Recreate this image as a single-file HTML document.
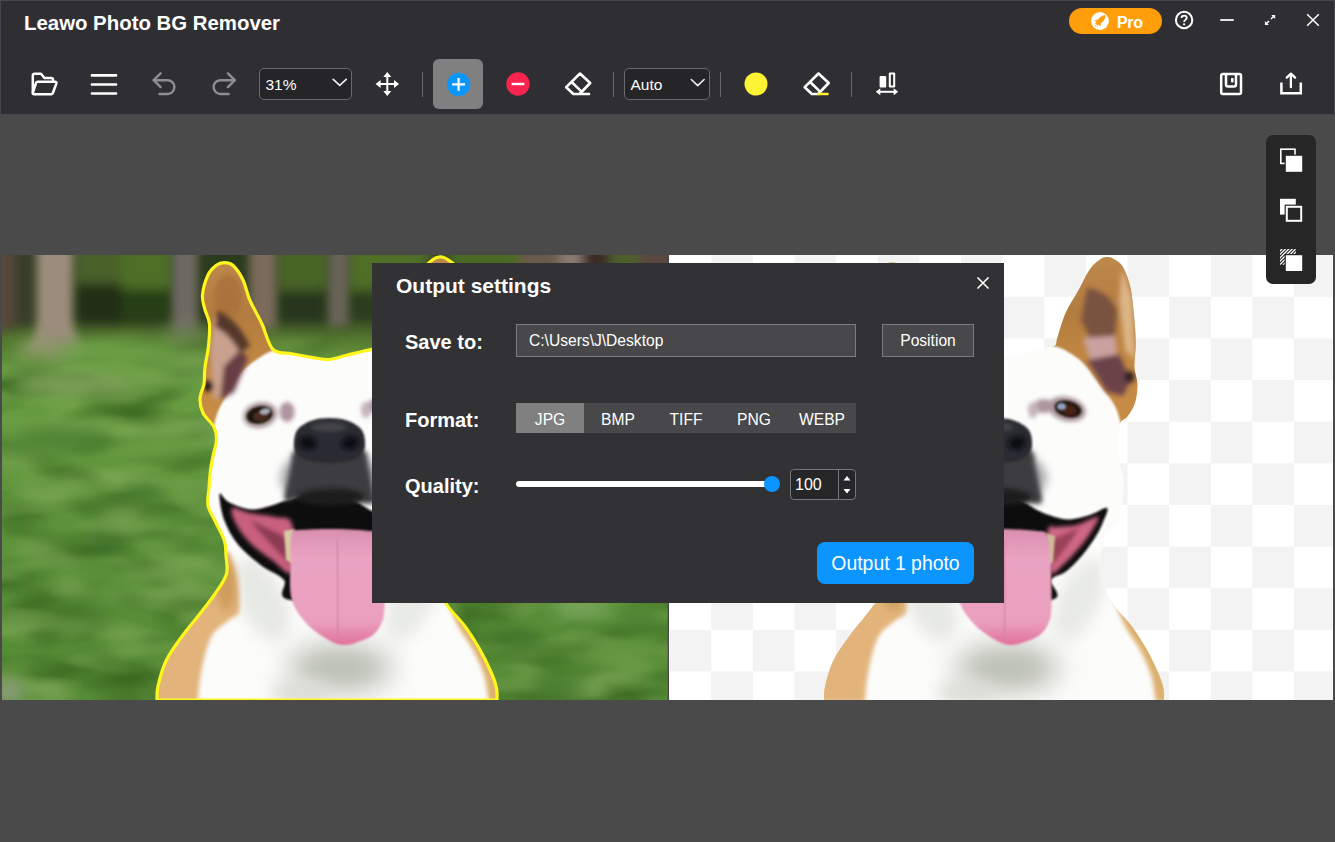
<!DOCTYPE html>
<html><head><meta charset="utf-8">
<style>
*{box-sizing:border-box;margin:0;padding:0}
html,body{width:1335px;height:842px;overflow:hidden;background:#4a4a4a;font-family:"Liberation Sans",sans-serif;}
#app{position:relative;width:1335px;height:842px;background:#4a4a4a;overflow:hidden}
#top{position:absolute;left:0;top:0;width:1335px;height:115px;background:#2f2f33;box-shadow:inset 1px 1px 0 #47474b, inset -1px 0 0 #47474b, inset 0 -1px 0 #47474b}
#title{position:absolute;left:24px;top:12px;font-weight:bold;font-size:20.4px;color:#fff;white-space:nowrap;letter-spacing:0px}
.abs{position:absolute}
.sep{position:absolute;top:72px;width:1px;height:25px;background:#6a6a6e}
.sel{position:absolute;top:68px;height:32px;border:1px solid #6b6b6f;border-radius:5px;background:#252527;color:#fff;font-size:15.5px;line-height:32px;padding-left:5.5px}
#dlg{position:absolute;left:372px;top:263px;width:632px;height:340px;background:#323234;color:#fff}
.lbl{position:absolute;left:33px;font-weight:bold;font-size:20px;white-space:nowrap}
.box{position:absolute;background:#48484a;border:1px solid #7c7c7e;font-size:15.6px;color:#fff;height:33px;line-height:31px;white-space:nowrap}
.tab{position:absolute;top:140px;width:68px;height:30px;background:#48484a;color:#fff;font-size:15.6px;line-height:33px;text-align:center}
</style></head><body>
<div id="app">
<!--PHOTOS-->
<svg class="abs" style="left:0;top:255px" width="1335" height="445" viewBox="0 255 1335 445">
<defs>
<filter id="b1" x="-20%" y="-20%" width="140%" height="140%"><feGaussianBlur stdDeviation="1"/></filter>
<filter id="b2" x="-30%" y="-30%" width="160%" height="160%"><feGaussianBlur stdDeviation="2.2"/></filter>
<filter id="b3" x="-30%" y="-30%" width="160%" height="160%"><feGaussianBlur stdDeviation="2.8"/></filter>
<filter id="b4" x="-30%" y="-30%" width="160%" height="160%"><feGaussianBlur stdDeviation="4"/></filter>
<filter id="b6" x="-30%" y="-30%" width="160%" height="160%"><feGaussianBlur stdDeviation="5.5"/></filter>
<filter id="b8" x="-40%" y="-40%" width="180%" height="180%"><feGaussianBlur stdDeviation="8"/></filter>
<filter id="b14" x="-50%" y="-50%" width="200%" height="200%"><feGaussianBlur stdDeviation="14"/></filter>
<filter id="mottd" x="0" y="0" width="100%" height="100%" color-interpolation-filters="sRGB"><feTurbulence type="fractalNoise" baseFrequency="0.012 0.032" numOctaves="2" seed="7"/><feColorMatrix type="matrix" values="0 0 0 0 0.22  0 0 0 0 0.40  0 0 0 0 0.12  2.0 0 0 0 -0.78"/></filter>
<filter id="mottl" x="0" y="0" width="100%" height="100%" color-interpolation-filters="sRGB"><feTurbulence type="fractalNoise" baseFrequency="0.013 0.036" numOctaves="2" seed="23"/><feColorMatrix type="matrix" values="0 0 0 0 0.52  0 0 0 0 0.68  0 0 0 0 0.36  0 1.7 0 0 -0.72"/></filter><linearGradient id="mfade" x1="0" y1="0" x2="0" y2="1"><stop offset="0" stop-color="#000"/><stop offset="0.1" stop-color="#fff"/></linearGradient><mask id="mm"><rect x="2" y="325" width="666" height="375" fill="url(#mfade)"/></mask>
<linearGradient id="grass" x1="0" y1="0" x2="0" y2="1">
<stop offset="0" stop-color="#3c4a28"/><stop offset="0.14" stop-color="#3a4c26"/><stop offset="0.19" stop-color="#55782f"/><stop offset="0.25" stop-color="#6b9f44"/><stop offset="0.45" stop-color="#62973d"/><stop offset="0.7" stop-color="#598f38"/><stop offset="1" stop-color="#568c36"/>
</linearGradient>
<pattern id="chk" x="669.6" y="255.2" width="83.25" height="83.25" patternUnits="userSpaceOnUse"><rect width="83.25" height="83.25" fill="#fff"/><rect x="41.625" width="41.625" height="41.625" fill="#f3f3f3"/><rect y="41.625" width="41.625" height="41.625" fill="#f3f3f3"/></pattern>
<clipPath id="cl"><rect x="2" y="255" width="665.5" height="445"/></clipPath>
<clipPath id="cr"><rect x="669" y="255" width="664" height="445"/></clipPath>
<clipPath id="dc"><path d="M157.0 700.0 C157.2 697.7 156.5 692.5 158.0 686.0 C159.5 679.5 162.1 669.2 166.0 661.0 C169.9 652.8 176.0 644.7 181.5 637.0 C187.0 629.3 193.3 622.3 199.0 615.0 C204.7 607.7 211.0 599.8 215.6 593.0 C220.2 586.2 224.8 580.2 226.5 574.0 C228.2 567.8 226.3 561.5 226.0 556.0 C225.7 550.5 226.2 546.7 224.5 541.0 C222.8 535.3 218.3 527.9 215.6 522.0 C212.8 516.1 209.1 511.2 208.0 505.5 C206.9 499.8 208.6 493.9 209.0 488.0 C209.4 482.1 209.8 475.3 210.5 470.0 C211.2 464.7 212.0 461.0 213.0 456.0 C214.0 451.0 216.3 444.8 216.5 440.0 C216.7 435.2 216.2 431.5 214.0 427.0 C211.8 422.5 205.3 417.8 203.0 413.0 C200.7 408.2 199.8 402.8 200.0 398.0 C200.2 393.2 203.2 389.2 204.0 384.0 C204.8 378.8 204.2 373.3 205.0 367.0 C205.8 360.7 207.8 353.2 208.5 346.0 C209.2 338.8 210.1 330.2 209.5 324.0 C208.9 317.8 206.0 313.8 204.8 309.0 C203.6 304.2 202.0 300.7 202.5 295.0 C203.0 289.3 205.8 279.9 208.0 275.0 C210.2 270.1 213.3 267.6 216.0 265.5 C218.7 263.4 221.2 262.6 224.0 262.6 C226.8 262.6 229.8 262.6 233.0 265.5 C236.2 268.4 240.2 274.2 243.0 280.0 C245.8 285.8 246.8 293.2 250.0 300.5 C253.2 307.8 258.2 315.8 262.0 324.0 C265.8 332.2 268.0 344.5 273.0 349.5 C278.0 354.5 285.2 352.4 292.0 353.8 C298.8 355.2 307.8 356.9 314.0 357.8 C320.2 358.8 323.7 359.9 329.0 359.5 C334.3 359.1 340.5 356.8 346.0 355.5 C351.5 354.2 356.7 352.8 362.0 351.5 C367.3 350.2 373.7 349.0 378.0 348.0 C382.3 347.0 385.9 347.3 388.0 345.5 C390.1 343.7 388.7 342.4 390.5 337.0 C392.3 331.6 395.2 320.7 398.6 313.0 C402.0 305.3 406.9 298.3 411.0 291.0 C415.1 283.7 419.3 274.2 423.0 269.0 C426.7 263.8 430.3 261.5 433.0 259.5 C435.7 257.5 436.8 257.2 439.0 257.0 C441.2 256.8 443.2 256.8 446.0 258.5 C448.8 260.2 453.1 262.1 456.0 267.0 C458.9 271.9 461.8 279.9 463.6 288.0 C465.4 296.1 466.1 306.4 467.0 315.6 C467.9 324.8 468.7 334.4 468.8 343.0 C468.9 351.6 467.2 360.2 467.5 367.0 C467.8 373.8 470.4 378.0 470.5 384.0 C470.6 390.0 469.7 397.6 468.0 403.0 C466.3 408.4 462.9 413.2 460.5 416.5 C458.1 419.8 455.1 418.9 453.5 423.0 C451.9 427.1 451.2 434.3 451.0 441.0 C450.8 447.7 451.6 456.8 452.5 463.0 C453.4 469.2 455.9 472.3 456.5 478.0 C457.1 483.7 457.0 489.8 456.0 497.0 C455.0 504.2 453.4 514.2 450.5 521.0 C447.6 527.8 441.4 531.5 438.5 538.0 C435.6 544.5 433.7 553.2 433.0 560.0 C432.3 566.8 432.2 571.5 434.5 579.0 C436.8 586.5 442.1 597.3 447.0 605.0 C451.9 612.7 458.7 617.8 464.0 625.0 C469.3 632.2 474.5 640.2 479.0 648.0 C483.5 655.8 488.1 665.3 491.0 672.0 C493.9 678.7 495.5 683.3 496.5 688.0 C497.5 692.7 496.9 698.0 497.0 700.0 Z"/></clipPath>
<linearGradient id="earg" x1="0" y1="0" x2="0" y2="1"><stop offset="0" stop-color="#bf8b4e"/><stop offset="0.35" stop-color="#b37c40"/><stop offset="0.7" stop-color="#c48a44"/><stop offset="1" stop-color="#c88c44"/></linearGradient>
<linearGradient id="tong" x1="0" y1="0" x2="0" y2="1"><stop offset="0" stop-color="#d98fb0"/><stop offset="0.25" stop-color="#eaa3c2"/><stop offset="0.8" stop-color="#ea9fbe"/><stop offset="1" stop-color="#e0709a"/></linearGradient>
<g id="dog">
<path d="M157.0 700.0 C157.2 697.7 156.5 692.5 158.0 686.0 C159.5 679.5 162.1 669.2 166.0 661.0 C169.9 652.8 176.0 644.7 181.5 637.0 C187.0 629.3 193.3 622.3 199.0 615.0 C204.7 607.7 211.0 599.8 215.6 593.0 C220.2 586.2 224.8 580.2 226.5 574.0 C228.2 567.8 226.3 561.5 226.0 556.0 C225.7 550.5 226.2 546.7 224.5 541.0 C222.8 535.3 218.3 527.9 215.6 522.0 C212.8 516.1 209.1 511.2 208.0 505.5 C206.9 499.8 208.6 493.9 209.0 488.0 C209.4 482.1 209.8 475.3 210.5 470.0 C211.2 464.7 212.0 461.0 213.0 456.0 C214.0 451.0 216.3 444.8 216.5 440.0 C216.7 435.2 216.2 431.5 214.0 427.0 C211.8 422.5 205.3 417.8 203.0 413.0 C200.7 408.2 199.8 402.8 200.0 398.0 C200.2 393.2 203.2 389.2 204.0 384.0 C204.8 378.8 204.2 373.3 205.0 367.0 C205.8 360.7 207.8 353.2 208.5 346.0 C209.2 338.8 210.1 330.2 209.5 324.0 C208.9 317.8 206.0 313.8 204.8 309.0 C203.6 304.2 202.0 300.7 202.5 295.0 C203.0 289.3 205.8 279.9 208.0 275.0 C210.2 270.1 213.3 267.6 216.0 265.5 C218.7 263.4 221.2 262.6 224.0 262.6 C226.8 262.6 229.8 262.6 233.0 265.5 C236.2 268.4 240.2 274.2 243.0 280.0 C245.8 285.8 246.8 293.2 250.0 300.5 C253.2 307.8 258.2 315.8 262.0 324.0 C265.8 332.2 268.0 344.5 273.0 349.5 C278.0 354.5 285.2 352.4 292.0 353.8 C298.8 355.2 307.8 356.9 314.0 357.8 C320.2 358.8 323.7 359.9 329.0 359.5 C334.3 359.1 340.5 356.8 346.0 355.5 C351.5 354.2 356.7 352.8 362.0 351.5 C367.3 350.2 373.7 349.0 378.0 348.0 C382.3 347.0 385.9 347.3 388.0 345.5 C390.1 343.7 388.7 342.4 390.5 337.0 C392.3 331.6 395.2 320.7 398.6 313.0 C402.0 305.3 406.9 298.3 411.0 291.0 C415.1 283.7 419.3 274.2 423.0 269.0 C426.7 263.8 430.3 261.5 433.0 259.5 C435.7 257.5 436.8 257.2 439.0 257.0 C441.2 256.8 443.2 256.8 446.0 258.5 C448.8 260.2 453.1 262.1 456.0 267.0 C458.9 271.9 461.8 279.9 463.6 288.0 C465.4 296.1 466.1 306.4 467.0 315.6 C467.9 324.8 468.7 334.4 468.8 343.0 C468.9 351.6 467.2 360.2 467.5 367.0 C467.8 373.8 470.4 378.0 470.5 384.0 C470.6 390.0 469.7 397.6 468.0 403.0 C466.3 408.4 462.9 413.2 460.5 416.5 C458.1 419.8 455.1 418.9 453.5 423.0 C451.9 427.1 451.2 434.3 451.0 441.0 C450.8 447.7 451.6 456.8 452.5 463.0 C453.4 469.2 455.9 472.3 456.5 478.0 C457.1 483.7 457.0 489.8 456.0 497.0 C455.0 504.2 453.4 514.2 450.5 521.0 C447.6 527.8 441.4 531.5 438.5 538.0 C435.6 544.5 433.7 553.2 433.0 560.0 C432.3 566.8 432.2 571.5 434.5 579.0 C436.8 586.5 442.1 597.3 447.0 605.0 C451.9 612.7 458.7 617.8 464.0 625.0 C469.3 632.2 474.5 640.2 479.0 648.0 C483.5 655.8 488.1 665.3 491.0 672.0 C493.9 678.7 495.5 683.3 496.5 688.0 C497.5 692.7 496.9 698.0 497.0 700.0 Z" fill="#fcfcfb"/>
<g clip-path="url(#dc)">
 <!-- shading on neck/chest -->
 <ellipse cx="340" cy="668" rx="52" ry="24" fill="#b9bdb1" filter="url(#b14)"/>
 <ellipse cx="262" cy="600" rx="22" ry="45" fill="#e6e8e3" filter="url(#b8)" transform="rotate(-25 262 600)"/>
 <ellipse cx="412" cy="600" rx="20" ry="45" fill="#e8eae6" filter="url(#b8)" transform="rotate(25 412 600)"/>
 <ellipse cx="300" cy="692" rx="30" ry="12" fill="#dcdcd6" filter="url(#b8)"/>
 <!-- tan chest -->
 <path d="M230.0 552.0 C230.7 555.0 232.7 563.7 234.0 570.0 C235.3 576.3 237.2 583.0 238.0 590.0 C238.8 597.0 240.5 607.0 239.0 612.0 C237.5 617.0 233.3 616.3 229.0 620.0 C224.7 623.7 217.1 628.0 213.0 634.0 C208.9 640.0 206.9 647.8 204.7 656.0 C202.4 664.2 200.6 675.3 199.5 683.0 C198.4 690.7 198.2 698.8 198.0 702.0 L140 702 L140 552 Z" fill="#e2b47c" filter="url(#b2)"/>
 <ellipse cx="226" cy="585" rx="10" ry="26" fill="#cf9c5c" filter="url(#b4)"/>
 <path d="M447.0 600.0 C448.8 604.3 453.7 617.7 458.0 626.0 C462.3 634.3 468.7 641.8 473.0 650.0 C477.3 658.2 481.3 666.3 484.0 675.0 C486.7 683.7 488.2 697.5 489.0 702.0 L520 702 L520 600 Z" fill="#ddb070" filter="url(#b2)"/>
 <!-- ears -->
 <g filter="url(#b1)">
 <path d="M276.0 349.0 C273.7 350.2 268.0 352.0 262.0 356.0 C256.0 360.0 245.9 366.5 240.0 373.0 C234.1 379.5 230.3 388.2 226.5 395.0 C222.7 401.8 219.2 408.2 217.0 414.0 C214.8 419.8 213.7 427.3 213.0 430.0 L185 432 L185 250 L285 250 Z" fill="url(#earg)"/>
 <path d="M384.0 346.0 C385.3 346.2 388.7 346.2 392.0 347.5 C395.3 348.8 399.7 350.9 404.0 353.8 C408.3 356.7 412.7 359.3 417.7 364.8 C422.7 370.3 429.0 379.8 434.0 386.6 C439.0 393.4 444.5 399.5 447.8 405.7 C451.1 411.9 453.0 420.9 454.0 424.0 L485 426 L485 250 L380 250 Z" fill="url(#earg)"/>
 </g>
 <!-- left ear inner -->
 <g filter="url(#b3)">
  <ellipse cx="228" cy="296" rx="14" ry="22" fill="#a8713c" opacity=".8"/>
  <path d="M214 318 Q232 325 246 342 L240 360 L228 395 L214 400 L210 350 Z" fill="#c9a18e"/>
  <path d="M218 310 Q238 320 250 346 L240 353 Q230 334 215 327 Z" fill="#553829"/>
  <path d="M224 366 L240 350 L248 358 L234 392 L220 400 Z" fill="#683c44"/>
  <ellipse cx="208.5" cy="386" rx="5" ry="6" fill="#241818"/>
 </g>
 <!-- right ear inner -->
 <g filter="url(#b3)">
  <path d="M455 268 L466 300 L468 360 L458 350 L452 300 Z" fill="#dcb585"/>
  <path d="M420 288 Q440 290 450 310 L448 336 L424 340 L414 320 Z" fill="#7a5240"/>
  <path d="M416 338 L448 336 L450 356 L424 362 Z" fill="#cba2a0"/>
  <path d="M420 360 L452 354 L464 380 L456 396 L440 392 Z" fill="#6c434a"/>
  <ellipse cx="462.5" cy="377" rx="5" ry="6" fill="#2a1c20"/>
 </g>
 <!-- eyes speckle -->
 <g filter="url(#b2)" opacity=".6">
  <ellipse cx="260" cy="415" rx="17" ry="12.5" fill="#6a4a50" transform="rotate(-12 260 415)"/>
  <ellipse cx="287" cy="412" rx="7.5" ry="10" fill="#7a5060"/>
  <ellipse cx="400" cy="409" rx="19" ry="12" fill="#6a4a50" transform="rotate(14 400 409)"/>
  <ellipse cx="377" cy="406" rx="10" ry="7" fill="#7a5060"/>
  <ellipse cx="366" cy="410" rx="5" ry="8" fill="#a08490"/>
 </g>
 <ellipse cx="259.5" cy="415" rx="13" ry="8.5" fill="#1f1210" transform="rotate(-12 259.5 415)" filter="url(#b1)"/>
 <ellipse cx="261" cy="416" rx="8" ry="5.5" fill="#4a2c1c" transform="rotate(-12 261 416)" filter="url(#b1)"/>
 <ellipse cx="265" cy="411.5" rx="5.5" ry="3.2" fill="#a6acba" transform="rotate(-12 265 411.5)" filter="url(#b1)"/>
 <ellipse cx="401" cy="409" rx="13.5" ry="8" fill="#1f1210" transform="rotate(14 401 409)" filter="url(#b1)"/>
 <ellipse cx="402" cy="410" rx="8" ry="5.2" fill="#4a2418" transform="rotate(14 402 410)" filter="url(#b1)"/>
 <ellipse cx="394.5" cy="406.5" rx="4.5" ry="3.6" fill="#8fa0c0" filter="url(#b1)"/>
 <!-- muzzle fuzz -->
 <ellipse cx="330" cy="478" rx="50" ry="30" fill="#9a9a9c" filter="url(#b4)" opacity=".8"/>
 <!-- mouth -->
 <path d="M219.5 494.0 C220.0 490.9 223.6 498.8 227.0 501.0 C230.4 503.2 235.5 505.6 240.0 507.0 C244.5 508.4 249.0 509.7 254.0 509.5 C259.0 509.3 265.2 507.3 270.0 506.0 C274.8 504.7 277.7 503.2 283.0 501.5 C288.3 499.8 294.8 497.6 302.0 496.0 C309.2 494.4 317.5 491.3 326.0 492.0 C334.5 492.7 345.7 497.0 353.0 500.0 C360.3 503.0 365.2 507.5 370.0 510.0 C374.8 512.5 376.8 513.4 382.0 515.0 C387.2 516.6 394.2 519.5 401.0 519.5 C407.8 519.5 416.5 516.9 423.0 515.0 C429.5 513.1 437.8 506.8 440.0 508.0 C442.2 509.2 437.8 517.3 436.0 522.0 C434.2 526.7 432.4 530.5 429.0 536.0 C425.6 541.5 420.5 549.1 415.5 555.0 C410.5 560.9 404.2 567.3 399.0 571.5 C393.8 575.7 386.5 575.2 384.0 580.0 C381.5 584.8 399.7 596.7 384.0 600.0 C368.3 603.3 306.7 603.3 290.0 600.0 C273.3 596.7 288.7 585.7 284.0 580.0 C279.3 574.3 269.7 571.9 262.0 566.0 C254.3 560.1 244.3 552.2 238.0 544.5 C231.7 536.8 227.1 527.9 224.0 519.5 C220.9 511.1 219.0 497.1 219.5 494.0 Z" fill="#0f0b0d" filter="url(#b1)"/>
 <path d="M232.0 508.0 C234.3 506.2 242.8 511.5 250.0 513.0 C257.2 514.5 268.0 515.2 275.0 517.0 C282.0 518.8 289.2 514.8 292.0 524.0 C294.8 533.2 295.3 566.0 292.0 572.0 C288.7 578.0 279.0 564.8 272.0 560.0 C265.0 555.2 256.0 549.0 250.0 543.0 C244.0 537.0 239.0 529.8 236.0 524.0 C233.0 518.2 229.7 509.8 232.0 508.0 Z" fill="#c8607e" filter="url(#b2)"/>
 <path d="M431.0 517.0 C428.7 515.8 416.8 523.3 410.0 525.0 C403.2 526.7 394.8 526.2 390.0 527.0 C385.2 527.8 382.1 522.5 381.0 530.0 C379.9 537.5 380.7 566.5 383.5 572.0 C386.3 577.5 393.1 567.2 398.0 563.0 C402.9 558.8 408.7 552.2 413.0 547.0 C417.3 541.8 421.0 537.0 424.0 532.0 C427.0 527.0 433.3 518.2 431.0 517.0 Z" fill="#cf6684" filter="url(#b2)"/>
 <path d="M250 520 Q270 545 292 565 L292 540 Q270 530 250 520Z" fill="#8c3a52" filter="url(#b2)"/>
 <path d="M412 528 Q398 550 384 566 L384 540 Z" fill="#9a4058" filter="url(#b2)"/>
 <!-- nose -->
 <path d="M296.0 450.0 C302.3 446.8 317.8 446.0 329.0 446.0 C340.2 446.0 356.5 446.8 363.0 450.0 C369.5 453.2 366.5 459.2 368.0 465.0 C369.5 470.8 371.0 478.7 372.0 485.0 C373.0 491.3 377.3 500.5 374.0 503.0 C370.7 505.5 360.0 501.8 352.0 500.0 C344.0 498.2 334.3 492.7 326.0 492.0 C317.7 491.3 308.8 494.5 302.0 496.0 C295.2 497.5 287.3 503.7 285.0 501.0 C282.7 498.3 287.0 486.0 288.0 480.0 C289.0 474.0 289.7 470.0 291.0 465.0 C292.3 460.0 289.7 453.2 296.0 450.0 Z" fill="#3e3e40" filter="url(#b3)"/>
 <ellipse cx="330" cy="497" rx="34" ry="9" fill="#1c1a1c" filter="url(#b3)"/>
 <path d="M294.0 441.0 C294.4 437.2 295.0 432.4 298.0 429.0 C301.0 425.6 306.8 422.3 312.0 420.5 C317.2 418.7 323.2 418.0 329.0 418.0 C334.8 418.0 341.7 418.7 347.0 420.5 C352.3 422.3 358.0 425.6 361.0 429.0 C364.0 432.4 364.7 437.2 365.0 441.0 C365.3 444.8 365.2 448.8 363.0 452.0 C360.8 455.2 357.7 458.2 352.0 460.0 C346.3 461.8 336.7 463.0 329.0 463.0 C321.3 463.0 311.6 461.8 306.0 460.0 C300.4 458.2 297.5 455.2 295.5 452.0 C293.5 448.8 293.6 444.8 294.0 441.0 Z" fill="#2a2a30" filter="url(#b1)"/>
 <ellipse cx="308" cy="443" rx="9" ry="6.5" fill="#101014" filter="url(#b2)" transform="rotate(15 308 443)"/>
 <ellipse cx="350" cy="443" rx="9" ry="6.5" fill="#101014" filter="url(#b2)" transform="rotate(-15 350 443)"/>
 <ellipse cx="329" cy="427" rx="18" ry="4.5" fill="#45454c" filter="url(#b2)"/>
 <path d="M329 446 V492" stroke="#161618" stroke-width="2.5" filter="url(#b1)"/>
 <!-- teeth -->
 <path d="M284 531 L294 529 L296 566 L286 560 Z" fill="#d9c9a2" filter="url(#b1)"/>
 <path d="M379 533 L388 536 L386 562 L380 566 Z" fill="#cdbd98" filter="url(#b1)"/>
 <!-- tongue -->
 <path d="M292.0 533.0 C293.6 528.0 292.8 530.7 300.0 530.0 C307.2 529.3 323.3 528.8 335.0 529.0 C346.7 529.2 362.5 530.0 370.0 531.0 C377.5 532.0 377.8 530.2 380.0 535.0 C382.2 539.8 382.8 550.8 383.5 560.0 C384.2 569.2 384.5 580.4 384.5 590.0 C384.5 599.6 385.2 610.2 383.5 617.5 C381.8 624.8 378.2 629.9 374.0 634.0 C369.8 638.1 363.2 640.2 358.0 642.0 C352.8 643.8 348.1 645.4 343.0 645.0 C337.9 644.6 333.7 643.2 327.5 639.5 C321.3 635.8 312.0 629.8 306.0 623.0 C300.0 616.2 294.1 609.0 291.5 598.5 C288.9 588.0 290.4 570.9 290.5 560.0 C290.6 549.1 290.4 538.0 292.0 533.0 Z" fill="url(#tong)" filter="url(#b1)"/>
 <path d="M337 540 Q339 590 338 636" stroke="#cf86a6" stroke-width="1.6" fill="none" filter="url(#b1)"/>
</g>
</g>
</defs>
<!-- LEFT -->
<g clip-path="url(#cl)">
<rect x="2" y="255" width="666" height="445" fill="url(#grass)"/>

<g filter="url(#b6)">
 <rect x="-10" y="245" width="24" height="85" fill="#57483a"/>
 <rect x="14" y="245" width="22" height="80" fill="#383c2b"/>
 <rect x="76" y="245" width="46" height="38" fill="#48622a"/>
 <rect x="76" y="283" width="46" height="40" fill="#222e18"/>
 <rect x="122" y="245" width="50" height="44" fill="#4e7028"/>
 <rect x="122" y="289" width="50" height="34" fill="#263d19"/>
 <rect x="198" y="245" width="50" height="78" fill="#2a3a1a"/>
 <rect x="278" y="245" width="50" height="45" fill="#4a6526"/>
 <rect x="278" y="290" width="50" height="32" fill="#26351a"/>
 <rect x="348" y="245" width="80" height="45" fill="#4f6e28"/>
 <rect x="348" y="290" width="80" height="30" fill="#2a3d1b"/>
 <rect x="450" y="245" width="70" height="70" fill="#4a6a22"/>
 <rect x="520" y="245" width="40" height="70" fill="#6a5a4a"/>
 <rect x="560" y="245" width="22" height="70" fill="#8a7a72"/>
 <rect x="582" y="245" width="28" height="70" fill="#3a2c28"/>
 <rect x="610" y="245" width="30" height="70" fill="#4e5e2a"/>
 <rect x="640" y="245" width="40" height="70" fill="#5a4640"/>
</g>
<g filter="url(#b4)">
 <path d="M37 245 H73 L72 320 Q76 340 82 350 H28 Q36 335 37 320 Z" fill="#9c8c7b"/>
 <rect x="173" y="245" width="24" height="84" fill="#6f6963"/>
 <rect x="250" y="245" width="26" height="84" fill="#7b6b5b"/>
 <rect x="329" y="245" width="19" height="82" fill="#6b6359"/>
</g>
<g mask="url(#mm)"><rect x="2" y="325" width="666" height="375" filter="url(#mottd)"/><rect x="2" y="325" width="666" height="375" filter="url(#mottl)"/></g>
<g filter="url(#b8)">
 <ellipse cx="55" cy="350" rx="40" ry="8" fill="#8e9a6c"/>
 <ellipse cx="185" cy="334" rx="22" ry="6" fill="#7f8f68"/>
 <ellipse cx="70" cy="384" rx="58" ry="8" fill="#85a05e"/>
 <ellipse cx="120" cy="352" rx="60" ry="10" fill="#6da246"/>
 <ellipse cx="143" cy="493" rx="24" ry="7" fill="#41742a"/>
 <ellipse cx="106" cy="541" rx="20" ry="8" fill="#41742a"/>
 <ellipse cx="82" cy="615" rx="30" ry="8" fill="#3f7226"/>
 <ellipse cx="46" cy="638" rx="16" ry="7" fill="#3f7226"/>
 <ellipse cx="123" cy="518" rx="22" ry="7" fill="#80a856"/>
 <ellipse cx="170" cy="567" rx="22" ry="7" fill="#7aa552"/>
 <ellipse cx="34" cy="551" rx="22" ry="6" fill="#7aa552"/>
 <ellipse cx="65" cy="584" rx="18" ry="6" fill="#76a450"/>
 <ellipse cx="8" cy="692" rx="16" ry="12" fill="#90a080"/>
 <ellipse cx="60" cy="440" rx="50" ry="12" fill="#4e8230"/>
 <ellipse cx="150" cy="450" rx="40" ry="9" fill="#6c9f44"/>
 <ellipse cx="580" cy="610" rx="26" ry="8" fill="#7aa860"/>
 <ellipse cx="520" cy="640" rx="22" ry="10" fill="#41742a"/>
 <ellipse cx="620" cy="660" rx="30" ry="10" fill="#6a9c44"/>
 <ellipse cx="560" cy="685" rx="30" ry="8" fill="#41742a"/>
 <ellipse cx="640" cy="620" rx="20" ry="8" fill="#4c8030"/>
</g>

<use href="#dog"/>
<path d="M157.0 700.0 C157.2 697.7 156.5 692.5 158.0 686.0 C159.5 679.5 162.1 669.2 166.0 661.0 C169.9 652.8 176.0 644.7 181.5 637.0 C187.0 629.3 193.3 622.3 199.0 615.0 C204.7 607.7 211.0 599.8 215.6 593.0 C220.2 586.2 224.8 580.2 226.5 574.0 C228.2 567.8 226.3 561.5 226.0 556.0 C225.7 550.5 226.2 546.7 224.5 541.0 C222.8 535.3 218.3 527.9 215.6 522.0 C212.8 516.1 209.1 511.2 208.0 505.5 C206.9 499.8 208.6 493.9 209.0 488.0 C209.4 482.1 209.8 475.3 210.5 470.0 C211.2 464.7 212.0 461.0 213.0 456.0 C214.0 451.0 216.3 444.8 216.5 440.0 C216.7 435.2 216.2 431.5 214.0 427.0 C211.8 422.5 205.3 417.8 203.0 413.0 C200.7 408.2 199.8 402.8 200.0 398.0 C200.2 393.2 203.2 389.2 204.0 384.0 C204.8 378.8 204.2 373.3 205.0 367.0 C205.8 360.7 207.8 353.2 208.5 346.0 C209.2 338.8 210.1 330.2 209.5 324.0 C208.9 317.8 206.0 313.8 204.8 309.0 C203.6 304.2 202.0 300.7 202.5 295.0 C203.0 289.3 205.8 279.9 208.0 275.0 C210.2 270.1 213.3 267.6 216.0 265.5 C218.7 263.4 221.2 262.6 224.0 262.6 C226.8 262.6 229.8 262.6 233.0 265.5 C236.2 268.4 240.2 274.2 243.0 280.0 C245.8 285.8 246.8 293.2 250.0 300.5 C253.2 307.8 258.2 315.8 262.0 324.0 C265.8 332.2 268.0 344.5 273.0 349.5 C278.0 354.5 285.2 352.4 292.0 353.8 C298.8 355.2 307.8 356.9 314.0 357.8 C320.2 358.8 323.7 359.9 329.0 359.5 C334.3 359.1 340.5 356.8 346.0 355.5 C351.5 354.2 356.7 352.8 362.0 351.5 C367.3 350.2 373.7 349.0 378.0 348.0 C382.3 347.0 385.9 347.3 388.0 345.5 C390.1 343.7 388.7 342.4 390.5 337.0 C392.3 331.6 395.2 320.7 398.6 313.0 C402.0 305.3 406.9 298.3 411.0 291.0 C415.1 283.7 419.3 274.2 423.0 269.0 C426.7 263.8 430.3 261.5 433.0 259.5 C435.7 257.5 436.8 257.2 439.0 257.0 C441.2 256.8 443.2 256.8 446.0 258.5 C448.8 260.2 453.1 262.1 456.0 267.0 C458.9 271.9 461.8 279.9 463.6 288.0 C465.4 296.1 466.1 306.4 467.0 315.6 C467.9 324.8 468.7 334.4 468.8 343.0 C468.9 351.6 467.2 360.2 467.5 367.0 C467.8 373.8 470.4 378.0 470.5 384.0 C470.6 390.0 469.7 397.6 468.0 403.0 C466.3 408.4 462.9 413.2 460.5 416.5 C458.1 419.8 455.1 418.9 453.5 423.0 C451.9 427.1 451.2 434.3 451.0 441.0 C450.8 447.7 451.6 456.8 452.5 463.0 C453.4 469.2 455.9 472.3 456.5 478.0 C457.1 483.7 457.0 489.8 456.0 497.0 C455.0 504.2 453.4 514.2 450.5 521.0 C447.6 527.8 441.4 531.5 438.5 538.0 C435.6 544.5 433.7 553.2 433.0 560.0 C432.3 566.8 432.2 571.5 434.5 579.0 C436.8 586.5 442.1 597.3 447.0 605.0 C451.9 612.7 458.7 617.8 464.0 625.0 C469.3 632.2 474.5 640.2 479.0 648.0 C483.5 655.8 488.1 665.3 491.0 672.0 C493.9 678.7 495.5 683.3 496.5 688.0 C497.5 692.7 496.9 698.0 497.0 700.0 Z" fill="none" stroke="#fdf51c" stroke-width="3.2" stroke-linejoin="round"/>
</g>
<!-- RIGHT -->
<g clip-path="url(#cr)">
<rect x="669" y="255" width="666" height="445" fill="url(#chk)"/>
<use href="#dog" transform="translate(667 0)"/>
</g>
</svg>
<!--/PHOTOS-->
<div id="top">
<div id="title">Leawo Photo BG Remover</div>

<div class="abs" style="left:1069px;top:8px;width:93px;height:26px;border-radius:13px;background:#ff9e0a"></div>
<svg class="abs" style="left:1089px;top:10px" width="22" height="22" viewBox="0 0 22 22"><circle cx="11" cy="11" r="8.9" fill="#fff"/><path d="M16.2 5.6 C13 5.8 10.3 7.6 8.8 10.2 L6.2 10.6 L7.6 12 L7 13.6 L8.3 14.9 L9.9 14.3 L11.3 15.7 L11.7 13.1 C14.3 11.6 16 8.8 16.2 5.6 Z M7.3 14.6 L5.9 16 M6.6 13.3 L5.6 14.3 M8.6 15.3 L7.6 16.3" fill="#ff9e0a" stroke="#ff9e0a" stroke-width="0.8" stroke-linejoin="round"/></svg>
<div class="abs" style="left:1117px;top:13px;font-weight:bold;font-size:16px;line-height:19px;color:#fff;letter-spacing:-0.3px">Pro</div>
<svg class="abs" style="left:1172px;top:8px" width="24" height="24" viewBox="0 0 24 24"><circle cx="12.1" cy="12" r="8.2" fill="none" stroke="#fff" stroke-width="2"/><path d="M9.5 10 Q9.5 7.6 12.1 7.6 Q14.7 7.6 14.7 9.8 Q14.7 11.2 13.3 12 Q12.1 12.7 12.1 13.9" fill="none" stroke="#fff" stroke-width="1.8"/><circle cx="12.1" cy="16.3" r="1.15" fill="#fff"/></svg>
<div class="abs" style="left:1220px;top:19px;width:14px;height:2px;border-radius:1px;background:#e4e4e4"></div>
<svg class="abs" style="left:1262px;top:12px" width="16" height="16" viewBox="0 0 16 16"><path d="M4 12 L7 9 M9 7 L12 4" stroke="#fff" stroke-width="1.5" fill="none"/><path d="M9.2 3 H13.2 V7 Z M2.9 9 V13 H6.9 Z" fill="#fff"/></svg>
<svg class="abs" style="left:1305px;top:12px" width="16" height="16" viewBox="0 0 16 16"><path d="M2.2 2.2 L13.8 13.8 M13.8 2.2 L2.2 13.8" stroke="#fff" stroke-width="1.5" fill="none"/></svg>


<div class="sel" style="left:259px;width:93px">31%</div>
<div class="sel" style="left:624px;width:86px">Auto</div>
<svg class="abs" style="left:0;top:55px" width="1335" height="60" viewBox="0 55 1335 60" fill="none" stroke="#fff" stroke-width="2.5" stroke-linecap="round" stroke-linejoin="round">
<!-- folder -->
<path d="M32.8 92.5 V75.6 Q32.8 73.8 34.6 73.8 H41 L44.4 78 H51.2 Q53 78 53 79.8 V81.6"/>
<path d="M37.6 81.8 H55 Q56.9 81.8 56.3 83.6 L52.9 93 Q52.4 94.2 51.1 94.2 H34.1 Q32.4 94.2 32.9 92.6 L36 83 Q36.4 81.8 37.6 81.8 Z"/>
<!-- hamburger -->
<path d="M92 75.4 H116 M92 84.5 H116 M92 93.5 H116" stroke-width="2.7"/>
<!-- undo/redo -->
<g stroke="#8e8e8e" stroke-width="2.4"><path d="M160.6 73.3 L153.6 80.2 L160.6 87.1 M153.6 80.2 H167.5 A6.9 6.9 0 0 1 167.5 94 H159.4"/>
<path d="M227.9 73.3 L234.9 80.2 L227.9 87.1 M234.9 80.2 H220.5 A6.9 6.9 0 0 0 220.5 94 H228.6"/></g>
<!-- chevrons -->
<path d="M333.2 79.4 L339.7 85.4 L346.2 79.4 M691.3 79.5 L697.7 85.6 L704.1 79.5" stroke-width="1.6" stroke="#f0f0f0"/>
<!-- move -->
<path d="M387.3 75 V93 M378.5 84 H396" stroke-width="2"/>
<path d="M387.3 72 L391.3 77 H383.3 Z M387.3 96 L391.3 91 H383.3 Z M375.6 84 L380.6 80 V88 Z M399 84 L394 80 V88 Z" fill="#fff" stroke="none"/>
<!-- active bg -->
<rect x="433" y="59" width="50" height="50" rx="6" fill="#808080" stroke="none"/>
<circle cx="458.6" cy="84.4" r="11.7" fill="#0c96fb" stroke="none"/>
<path d="M458.6 78 V90.8 M452.2 84.4 H465" stroke-width="2.2" stroke-linecap="butt"/>
<circle cx="518" cy="84" r="11.7" fill="#f8244f" stroke="none"/>
<path d="M511.6 84 H524.4" stroke-width="2.4" stroke-linecap="butt"/>
<!-- eraser 1 -->
<g stroke-width="2.6"><path d="M580 73.5 L590.2 83 L579.6 94 H573.4 L566.2 87.2 Z M579.6 94 H589 M571.6 82 L581.6 91.6"/></g>
<!-- yellow -->
<circle cx="756" cy="84" r="11.5" fill="#fdf335" stroke="none"/>
<!-- eraser 2 -->
<g stroke-width="2.6" transform="translate(238.5 0)"><path d="M580 73.5 L590.2 83 L579.6 94 H573.4 L566.2 87.2 Z M571.6 82 L581.6 91.6"/><path d="M579.6 94 H589" stroke="#fdf335"/></g>
<!-- compare -->
<rect x="879.6" y="76" width="6.6" height="11.4" rx="1" fill="#fff" stroke="none"/>
<rect x="889.8" y="73.4" width="4.4" height="13" stroke-width="2"/>
<path d="M879 91.8 H895" stroke-width="2" stroke-linecap="butt"/>
<path d="M875.8 91.8 L880.3 88.3 V95.3 Z M898.2 91.8 L893.7 88.3 V95.3 Z" fill="#fff" stroke="none"/>
<!-- save -->
<rect x="1221.2" y="74" width="19.8" height="20" rx="1.8"/>
<path d="M1226 74.5 V84.6 Q1226 86.6 1228 86.6 H1234 Q1236 86.6 1236 84.6 V74.5"/>
<rect x="1231" y="78" width="2.6" height="4.4" rx="0.8" fill="#fff" stroke="none"/>
<!-- export -->
<path d="M1281.4 82.6 V93.3 H1300.8 V82.6" stroke-linecap="butt" stroke-linejoin="miter"/>
<path d="M1290.9 74.2 V87.2 M1286.7 77.6 L1290.9 73.6 L1295.1 77.6" stroke-width="2.3"/>
</svg>
<div class="sep" style="left:422px"></div><div class="sep" style="left:613px"></div><div class="sep" style="left:720px"></div><div class="sep" style="left:851px"></div>

</div>

<div class="abs" style="left:1266px;top:135px;width:50px;height:149px;border-radius:7px;background:#262626"></div>
<svg class="abs" style="left:1266px;top:135px" width="50" height="149" viewBox="1266 135 50 149">
<rect x="1280.8" y="149.2" width="14.2" height="14.2" fill="none" stroke="#fff" stroke-width="1.6"/>
<rect x="1284.6" y="154.6" width="18.6" height="18.2" fill="#262626"/>
<rect x="1285.8" y="155.8" width="16.4" height="16" fill="#fff"/>
<rect x="1280" y="198.8" width="15.8" height="15.8" fill="#fff"/>
<rect x="1284.6" y="204.6" width="18.6" height="18.2" fill="#262626"/>
<rect x="1286.8" y="206.8" width="14.4" height="14" fill="none" stroke="#fff" stroke-width="2"/>
<g stroke="#fff" stroke-width="1.3"><clipPath id="hc"><rect x="1280" y="249" width="15.8" height="15.8"/></clipPath><g clip-path="url(#hc)"><path d="M1276 255 L1288 243 M1276 258.4 L1291.4 243 M1276 261.8 L1294.8 243 M1276 265.2 L1298.2 243 M1276 268.6 L1301.6 243 M1276 272 L1305 243 M1279.4 272 L1308.4 243"/></g></g>
<rect x="1284.6" y="254" width="18.6" height="18.2" fill="#262626"/>
<rect x="1285.8" y="255.2" width="16.4" height="15.8" fill="#fff"/>
</svg>

<div id="dlg">
<div class="abs" style="left:24px;top:11px;font-weight:bold;font-size:21px;white-space:nowrap">Output settings</div>
<svg class="abs" style="left:604px;top:13px" width="14" height="14" viewBox="0 0 14 14"><path d="M1.5 1.5 L12.5 12.5 M12.5 1.5 L1.5 12.5" stroke="#fff" stroke-width="1.6" fill="none"/></svg>
<div class="lbl" style="top:68px">Save to:</div>
<div class="box" style="left:144px;top:61px;width:340px;padding-left:12px">C:\Users\J\Desktop</div>
<div class="box" style="left:510px;top:61px;width:92px;text-align:center">Position</div>
<div class="lbl" style="top:146px">Format:</div>
<div class="tab" style="left:144px;background:#808080">JPG</div>
<div class="tab" style="left:212px">BMP</div>
<div class="tab" style="left:280px">TIFF</div>
<div class="tab" style="left:348px">PNG</div>
<div class="tab" style="left:416px">WEBP</div>
<div class="lbl" style="top:212px">Quality:</div>
<div class="abs" style="left:144px;top:218px;width:256px;height:6px;border-radius:3px;background:#fff"></div>
<div class="abs" style="left:392px;top:213px;width:16px;height:16px;border-radius:8px;background:#0a95ff"></div>
<div class="abs" style="left:418px;top:206px;width:66px;height:31px;border:1px solid #77777a;border-radius:4px;background:#262628"></div>
<div class="abs" style="left:423px;top:206px;font-size:16px;line-height:32px">100</div>
<div class="abs" style="left:466px;top:207px;width:1px;height:29px;background:#77777a"></div>
<svg class="abs" style="left:467px;top:207px" width="16" height="29" viewBox="0 0 16 29"><path d="M4.5 10.5 L8 6 L11.5 10.5 Z M4.5 19 L8 23.5 L11.5 19 Z" fill="#fff"/></svg>
<div class="abs" style="left:445px;top:279px;width:157px;height:42px;border-radius:8px;background:#0a95ff;font-size:19.4px;line-height:43px;text-align:center;white-space:nowrap">Output 1 photo</div>
</div>
</div>
</body></html>
